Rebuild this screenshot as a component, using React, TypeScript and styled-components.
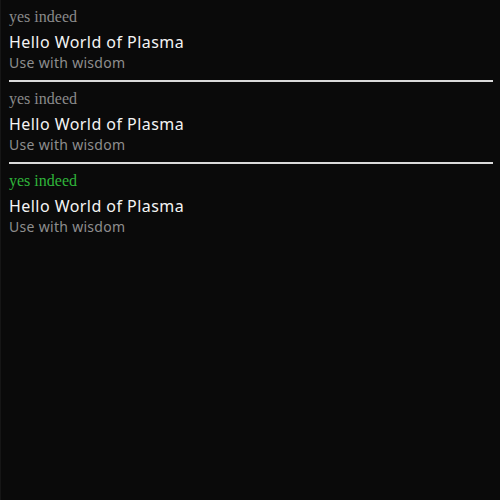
import React from "react";
import styled, { createGlobalStyle } from "styled-components";

const Global = createGlobalStyle`
  html, body { margin: 0; padding: 0; background: #0a0a0a; }
  body { min-height: 500px; }
`;

const Page = styled.div`
  min-height: 500px;
  box-sizing: border-box;
  border-left: 1px solid #161616;
  padding: 7px 7px 0 8px;
`;

const Item = styled.div<{ $last?: boolean }>`
  padding-bottom: 8px;
  border-bottom: ${(p) => (p.$last ? "2px solid transparent" : "2px solid #dadada")};
  margin-bottom: 7px;
`;

const Caption = styled.div<{ $active?: boolean }>`
  font-family: "Liberation Serif", serif;
  font-size: 16px;
  line-height: 20px;
  color: ${(p) => (p.$active ? "#2fb43a" : "#8a8a8a")};
`;

const Title = styled.div`
  font-family: "Noto Sans", sans-serif;
  font-size: 16px;
  line-height: 22px;
  letter-spacing: 0.45px;
  margin-top: 4px;
  color: #f4f4f4;
`;

const Subtitle = styled.div`
  font-family: "Noto Sans", sans-serif;
  font-size: 14px;
  line-height: 19px;
  letter-spacing: 0.3px;
  color: #8e8e8e;
`;

const items = [{ active: false }, { active: false }, { active: true }];

export default function App() {
  return (
    <>
      <Global />
      <Page>
        {items.map((it, i) => (
          <Item key={i} $last={i === items.length - 1}>
            <Caption $active={it.active}>yes indeed</Caption>
            <Title>Hello World of Plasma</Title>
            <Subtitle>Use with wisdom</Subtitle>
          </Item>
        ))}
      </Page>
    </>
  );
}
